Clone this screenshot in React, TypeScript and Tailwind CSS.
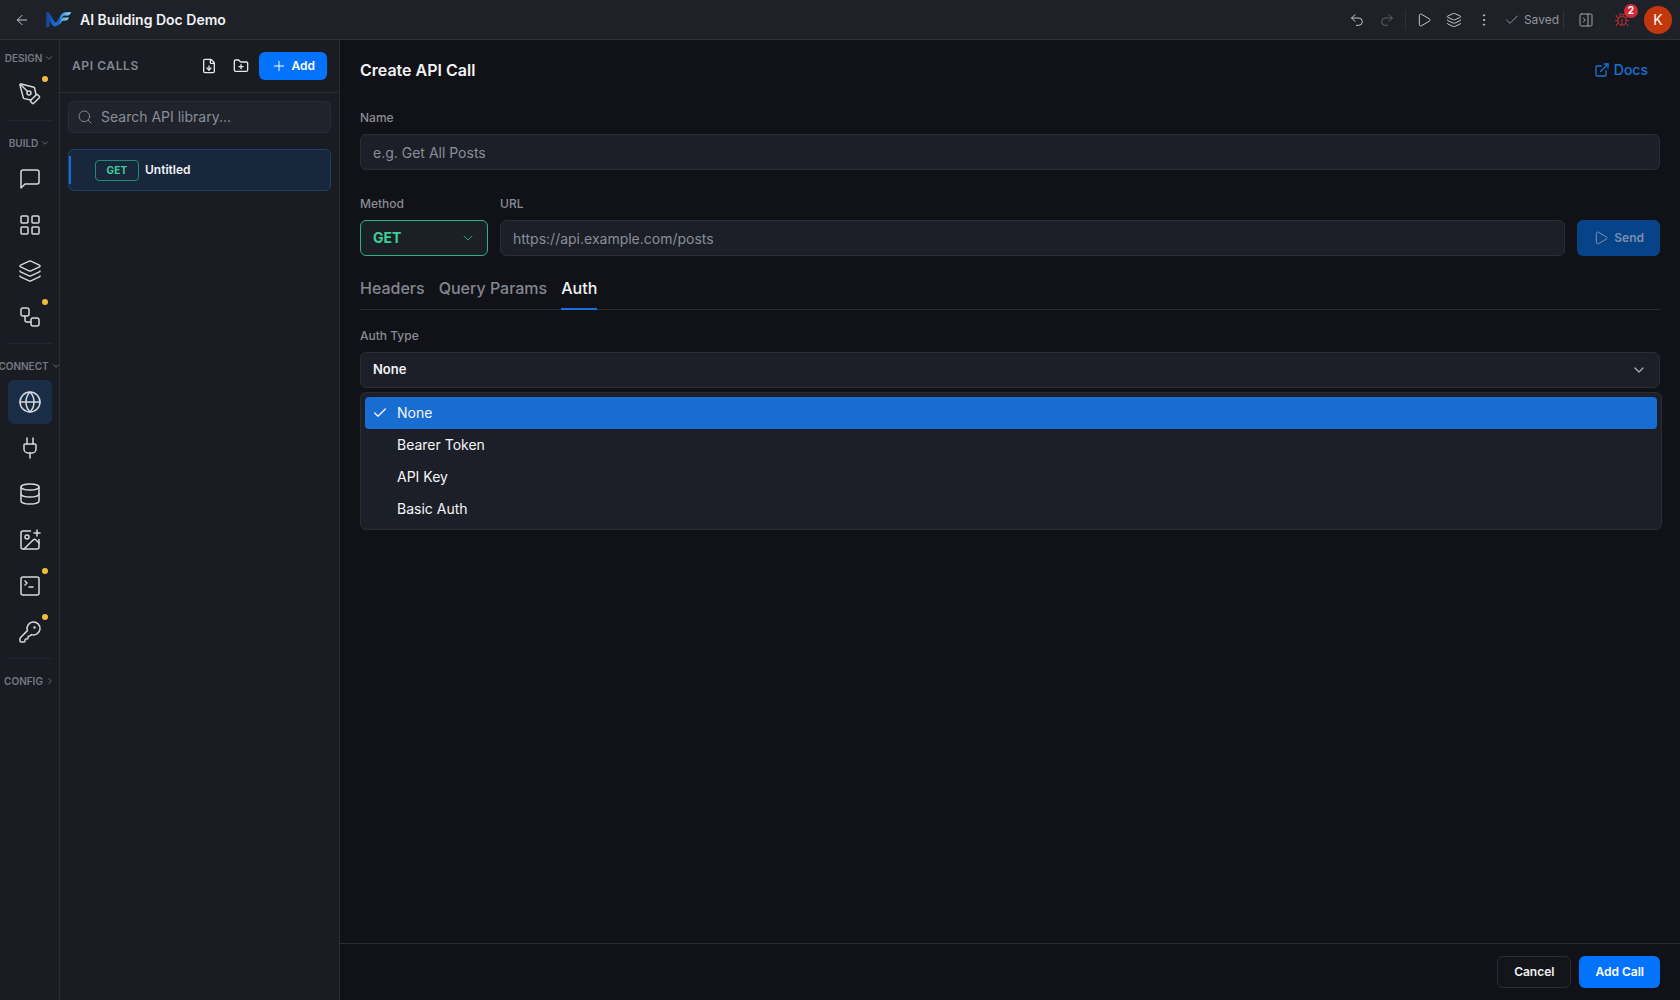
import type { ReactNode } from "react";
import {
  ArrowLeft, Bug, Check, ChevronDown, ChevronRight, Database, EllipsisVertical, ExternalLink,
  FileDown, FolderPlus, Globe, ImagePlus, KeyRound, Layers, LayoutGrid, PanelRightClose,
  PenTool, Play, Plug, Plus, Redo2, Search, SquareTerminal, Undo2, Workflow,
} from "lucide-react";

function Logo() {
  return (
    <svg width="26" height="18" viewBox="0 0 26 18" aria-hidden="true">
      <defs>
        <linearGradient id="n" x1="0" y1="0" x2="1" y2="0">
          <stop offset="0" stopColor="#173f8c" />
          <stop offset="0.4" stopColor="#1a6fe0" />
          <stop offset="0.7" stopColor="#1c55b0" />
          <stop offset="1" stopColor="#3aa0e8" />
        </linearGradient>
        <linearGradient id="f" x1="0" y1="0" x2="1" y2="0">
          <stop offset="0" stopColor="#2a86dc" />
          <stop offset="1" stopColor="#8fd8f2" />
        </linearGradient>
      </defs>
      <path d="M1 16.500V2C1 .8 3.200 .6 4.200 2L9.500 10.500C10.300 11.700 11.300 11.700 12.200 10.300L16 4C17.300 2 19 1.200 21 1.200H26C25.300 3.500 23.500 4.600 21.500 4.600H20C18.500 4.600 17.800 5.200 17 6.500L13 13.500C11.500 16.200 8.500 16.200 7 13.800L4.500 9.500V14C4.500 15.700 3 16.500 1 16.500Z" fill="url(#n)" />
      <path d="M16 4C17.300 2 19 1.200 21 1.200H26C25.300 3.500 23.500 4.600 21.500 4.600H20C18.500 4.600 17.800 5.200 17 6.500L15.500 9C14.500 7.500 14.800 5.800 16 4Z" fill="url(#f)" />
      <path d="M18 6.500H24C23.200 8.800 21.800 9.800 19.800 9.800H18.500C17.200 9.800 16.700 10.600 16 11.800 15.300 13 14.300 13.800 13 14.300L16 8.500C16.500 7.300 17 6.500 18 6.500Z" fill="url(#f)" />
    </svg>
  );
}

function MessageIcon() {
  return (
    <svg width="24" height="24" viewBox="0 0 24 24" fill="none" stroke="currentColor" strokeWidth="1.5" strokeLinecap="round" strokeLinejoin="round">
      <path d="M21 15a2 2 0 0 1-2 2H7l-4 4V5a2 2 0 0 1 2-2h14a2 2 0 0 1 2 2z" />
    </svg>
  );
}

function RailLabel({ children, open = true }: { children: ReactNode; open?: boolean }) {
  const Arrow = open ? ChevronDown : ChevronRight;
  return (
    <button type="button" className="flex h-7 shrink-0 items-center gap-0.5 text-[10px] font-semibold whitespace-nowrap text-[#777982]">
      {children}
      <Arrow size={10} strokeWidth={2} />
    </button>
  );
}

function RailItem({ label, dot, active, children }: { label: string; dot?: boolean; active?: boolean; children: ReactNode }) {
  return (
    <button
      type="button"
      aria-label={label}
      className={`relative flex size-11 shrink-0 items-center justify-center rounded-md text-[#d5d7dc] ${active ? "bg-[#192d47]" : ""}`}
    >
      {children}
      {dot && <span className="absolute top-1 right-1 size-1.5 rounded-full bg-[#f0bd35]" />}
    </button>
  );
}

function RailGroup({ children }: { children: ReactNode }) {
  return <div className="flex flex-col items-center gap-0.5">{children}</div>;
}

function RailRule() {
  return <hr className="mt-1 mb-2 w-11 shrink-0 border-[#23262e]" />;
}

function ToolButton({ label, className = "text-[#c3c5ca]", children }: { label: string; className?: string; children: ReactNode }) {
  return (
    <button type="button" aria-label={label} className={`flex size-7 items-center justify-center ${className}`}>
      {children}
    </button>
  );
}

function Header() {
  return (
    <header className="flex h-10 shrink-0 items-center justify-between border-b border-[#2f3137] bg-[#1e2128] px-2">
      <div className="flex items-center gap-[9px]">
        <ToolButton label="Back">
          <ArrowLeft size={16} strokeWidth={1.5} />
        </ToolButton>
        <Logo />
        <h1 className="text-sm font-semibold text-[#f1f2f4]">AI Building Doc Demo</h1>
      </div>
      <div className="flex items-center">
        <div className="flex gap-0.5">
          <ToolButton label="Undo"><Undo2 size={16} strokeWidth={1.5} /></ToolButton>
          <ToolButton label="Redo" className="text-[#5f6269]"><Redo2 size={16} strokeWidth={1.5} /></ToolButton>
        </div>
        <span className="mx-1 h-5 w-px bg-[#2f3138]" />
        <div className="flex gap-0.5">
          <ToolButton label="Run"><Play size={16} strokeWidth={1.5} /></ToolButton>
          <ToolButton label="Versions"><Layers size={16} strokeWidth={1.5} /></ToolButton>
          <ToolButton label="More"><EllipsisVertical size={16} strokeWidth={1.5} /></ToolButton>
        </div>
        <span className="ml-1.5 flex items-center gap-1 text-xs text-[#93969d]">
          <Check size={16} strokeWidth={1.5} />
          Saved
        </span>
        <span className="mr-2 ml-1 h-5 w-px bg-[#2f3138]" />
        <ToolButton label="Toggle panel" className="text-[#a3a6ac]"><PanelRightClose size={16} strokeWidth={1.5} /></ToolButton>
        <span className="relative ml-2 flex">
          <ToolButton label="Issues" className="text-[#c22d30]"><Bug size={16} strokeWidth={1.5} /></ToolButton>
          <span className="absolute -top-0.5 -right-0.5 flex size-3.5 items-center justify-center rounded-full bg-[#d02c38] text-[10px] font-bold text-white">2</span>
        </span>
        <button type="button" aria-label="Account" className="ml-2 flex size-7 items-center justify-center rounded-full bg-[#c2380c] text-sm text-white">K</button>
      </div>
    </header>
  );
}

function Rail() {
  return (
    <nav className="flex w-15 shrink-0 flex-col items-center border-r border-[#2b2d34] bg-[#1a1c24] pt-1">
      <RailLabel>DESIGN</RailLabel>
      <RailGroup>
        <RailItem label="Design" dot><PenTool size={24} strokeWidth={1.5} /></RailItem>
      </RailGroup>
      <RailRule />
      <RailLabel>BUILD</RailLabel>
      <RailGroup>
        <RailItem label="Chat"><MessageIcon /></RailItem>
        <RailItem label="Components"><LayoutGrid size={24} strokeWidth={1.5} /></RailItem>
        <RailItem label="Layers"><Layers size={24} strokeWidth={1.5} /></RailItem>
        <RailItem label="Workflows" dot><Workflow size={24} strokeWidth={1.5} /></RailItem>
      </RailGroup>
      <RailRule />
      <RailLabel>CONNECT</RailLabel>
      <RailGroup>
        <RailItem label="API calls" active><Globe size={24} strokeWidth={1.5} /></RailItem>
        <RailItem label="Integrations"><Plug size={24} strokeWidth={1.5} /></RailItem>
        <RailItem label="Database"><Database size={24} strokeWidth={1.5} /></RailItem>
        <RailItem label="Media"><ImagePlus size={24} strokeWidth={1.5} /></RailItem>
        <RailItem label="Code" dot><SquareTerminal size={24} strokeWidth={1.5} /></RailItem>
        <RailItem label="Secrets" dot><KeyRound size={24} strokeWidth={1.5} /></RailItem>
      </RailGroup>
      <RailRule />
      <RailLabel open={false}>CONFIG</RailLabel>
    </nav>
  );
}

function Library() {
  return (
    <aside className="flex w-70 shrink-0 flex-col border-r border-[#2b2d34] bg-[#1a1c24]">
      <div className="flex items-center justify-between border-b border-[#2b2d34] p-3">
        <h2 className="text-xs font-semibold tracking-wider text-[#85878f]">API CALLS</h2>
        <div className="flex items-center gap-1">
          <ToolButton label="Import" className="text-[#e4e6ea]"><FileDown size={16} strokeWidth={2} /></ToolButton>
          <ToolButton label="New folder" className="text-[#e4e6ea]"><FolderPlus size={16} strokeWidth={2} /></ToolButton>
          <button type="button" className="flex h-7 items-center gap-1 rounded-md bg-[#0473fb] px-3 text-xs font-semibold text-white">
            <Plus size={16} strokeWidth={1.5} />
            Add
          </button>
        </div>
      </div>
      <div className="p-2">
        <label className="flex h-8 items-center gap-2 rounded-md border border-[#2b2d35] bg-[#20232b] px-2 text-[#85878f]">
          <Search size={16} strokeWidth={1.5} />
          <input type="text" aria-label="Search API library" placeholder="Search API library..." className="min-w-0 flex-1 bg-transparent text-sm outline-none placeholder:text-[#8a8d98]" />
        </label>
        <button type="button" className="relative mt-4 flex h-[42px] w-full items-center gap-1.5 rounded-md border border-[#1d4068] bg-[#18273b] pl-[26px]">
          <span className="absolute top-1.5 bottom-1.5 left-0 w-0.5 bg-[#1b6cd0]" />
          <span className="flex h-[21px] w-11 items-center justify-center rounded border border-[#268a70] text-[10px] font-bold tracking-wide text-[#3ecf97]">GET</span>
          <span className="text-xs font-semibold text-[#f1f2f4]">Untitled</span>
        </button>
      </div>
    </aside>
  );
}

const labelStyle = "text-xs font-medium text-[#8a8c95]";
const inputStyle = "h-9 w-full rounded-md border border-[#2b2d35] bg-[#1c1f27] px-3 text-sm text-[#f1f2f4] outline-none placeholder:text-[#8a8d98]";

function Editor() {
  const options = ["None", "Bearer Token", "API Key", "Basic Auth"];
  return (
    <main className="flex min-w-0 flex-1 flex-col bg-[#111217]">
      <div className="flex-1 px-5">
        <div className="flex h-15 items-center justify-between">
          <h2 className="text-base font-semibold text-[#f1f2f4]">Create API Call</h2>
          <a href="#docs" className="mr-3 flex items-center gap-1 text-sm font-medium text-[#1a72d8]">
            <ExternalLink size={16} strokeWidth={2} />
            Docs
          </a>
        </div>
        <div className="mt-2.5 flex flex-col gap-2">
          <label htmlFor="name" className={labelStyle}>Name</label>
          <input id="name" type="text" placeholder="e.g. Get All Posts" className={inputStyle} />
        </div>
        <div className="mt-6.5 flex items-end gap-3">
          <div className="flex w-32 flex-col gap-2">
            <label htmlFor="method" className={labelStyle}>Method</label>
            <div className="relative">
              <select id="method" className="h-9 w-full appearance-none rounded-md border border-[#2fb288] bg-[#1a2026] px-3 text-sm font-bold text-[#3ecf97] outline-none">
                <option>GET</option>
              </select>
              <ChevronDown size={16} strokeWidth={1.5} className="pointer-events-none absolute top-2.5 right-3 text-[#2f9d7a]" />
            </div>
          </div>
          <div className="flex min-w-0 flex-1 flex-col gap-2">
            <label htmlFor="url" className={labelStyle}>URL</label>
            <input id="url" type="text" placeholder="https://api.example.com/posts" className={inputStyle} />
          </div>
          <button type="button" className="flex h-9 items-center gap-[5px] rounded-md bg-[#064389] px-4 text-xs font-semibold text-[#7a90ae]">
            <Play size={16} strokeWidth={1.5} />
            Send
          </button>
        </div>
        <div role="tablist" className="mt-4 flex h-[38px] gap-3.5 border-b border-[#2b2d33] text-base font-medium text-[#858790]">
          <button type="button" role="tab" aria-selected="false" className="-mb-px border-b-2 border-transparent pb-1">Headers</button>
          <button type="button" role="tab" aria-selected="false" className="-mb-px border-b-2 border-transparent pb-1">Query Params</button>
          <button type="button" role="tab" aria-selected="true" className="-mb-px border-b-2 border-[#1a6fe0] pb-1 text-[#f1f2f4]">Auth</button>
        </div>
        <div className="mt-4.5 flex flex-col gap-2">
          <span id="auth-label" className={labelStyle}>Auth Type</span>
          <div className="relative">
            <button type="button" role="combobox" aria-expanded="true" aria-controls="auth-options" aria-labelledby="auth-label" className="flex h-9 w-full items-center justify-between rounded-md border border-[#2b2d35] bg-[#1c1f27] px-3 text-[13px] font-semibold text-[#f1f2f4]">
              None
              <ChevronDown size={16} strokeWidth={2} className="text-[#a5a7ad]" />
            </button>
            <div id="auth-options" role="listbox" aria-labelledby="auth-label" className="absolute top-full left-0 mt-1 w-[calc(100%+2px)] rounded-md border border-[#2b2d33] bg-[#1c1f27] p-1">
              {options.map((name, i) => (
                <button
                  key={name}
                  type="button"
                  role="option"
                  aria-selected={i === 0}
                  className={`flex h-8 w-full items-center rounded pl-[7px] text-sm text-[#f6f7f9] ${i === 0 ? "bg-[#186dd2]" : ""}`}
                >
                  <span className="w-[25px]">{i === 0 && <Check size={16} strokeWidth={2} />}</span>
                  {name}
                </button>
              ))}
            </div>
          </div>
        </div>
      </div>
      <footer className="flex justify-end gap-2 border-t border-[#2b2d33] p-3 pr-5">
        <button type="button" className="h-8 rounded-md border border-[#2b2d35] bg-[#14151b] px-4 text-xs font-semibold text-[#f1f2f4]">Cancel</button>
        <button type="button" className="h-8 rounded-md bg-[#0473fb] px-4 text-xs font-semibold text-white">Add Call</button>
      </footer>
    </main>
  );
}

export default function App() {
  return (
    <div className="flex min-h-screen flex-col bg-[#111217] font-['Inter',sans-serif]">
      <Header />
      <div className="flex flex-1">
        <Rail />
        <Library />
        <Editor />
      </div>
    </div>
  );
}
